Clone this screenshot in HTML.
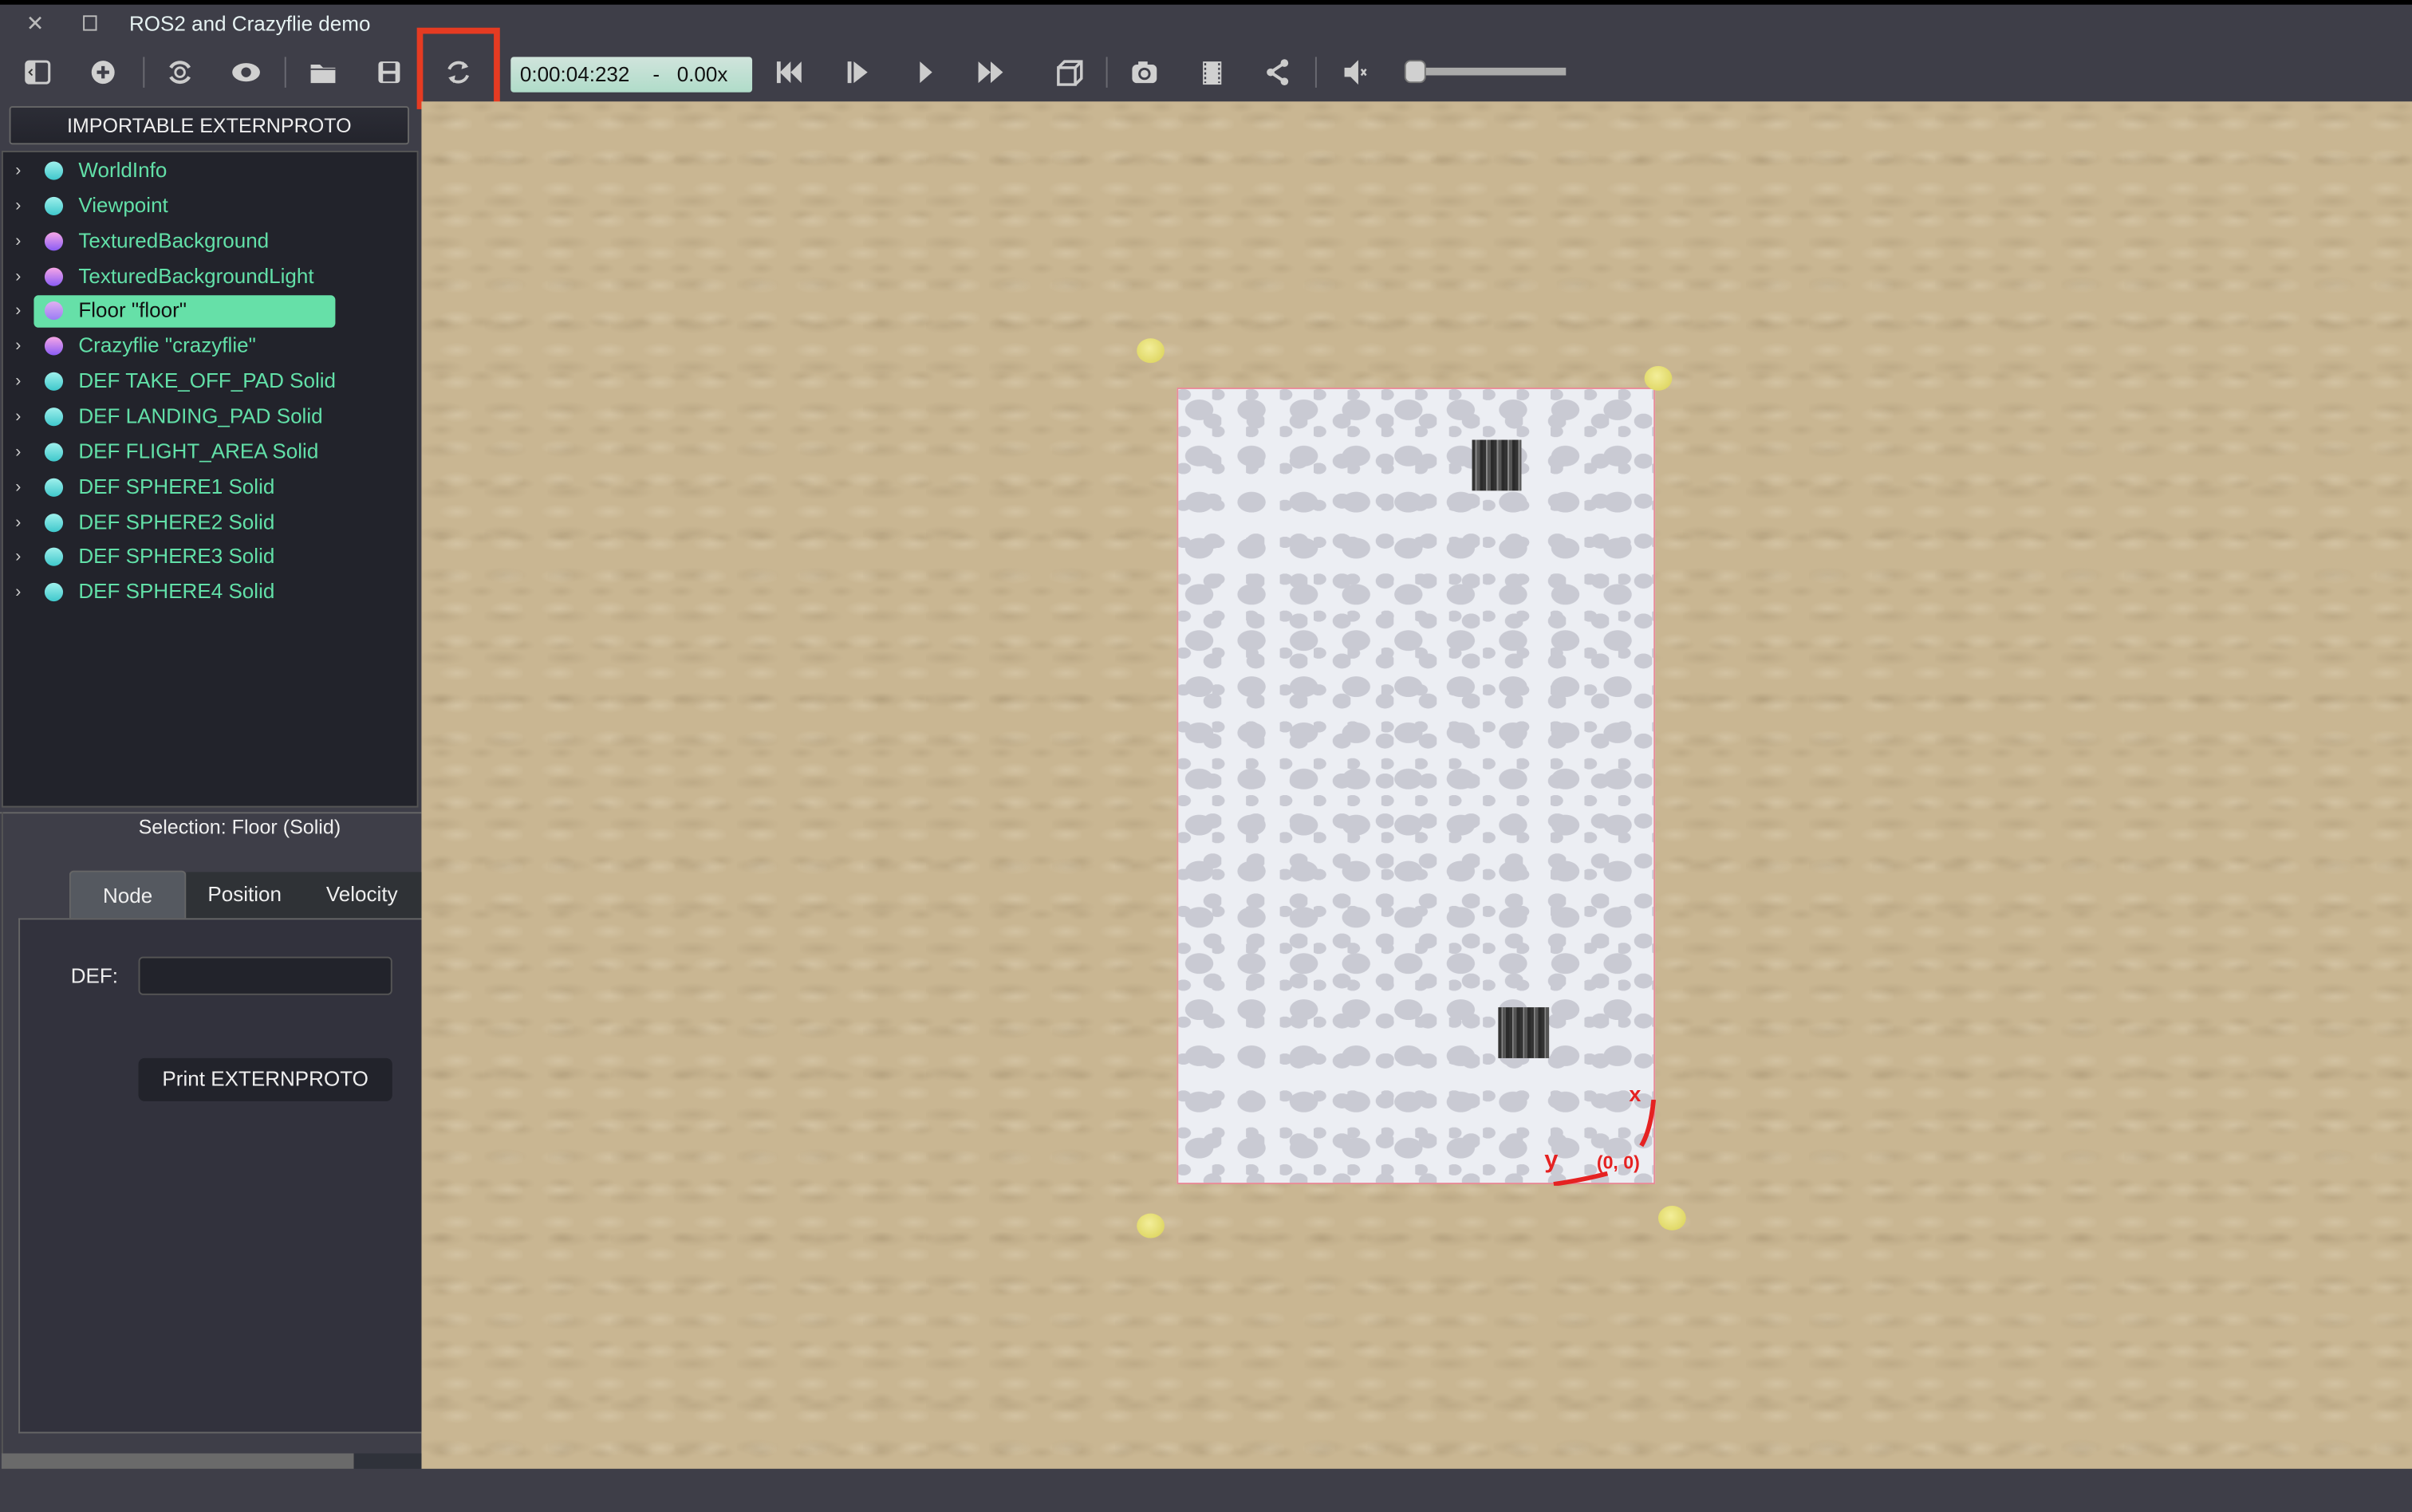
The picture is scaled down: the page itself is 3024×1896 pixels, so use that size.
<!DOCTYPE html>
<html><head><meta charset="utf-8"><style>
*{margin:0;padding:0;box-sizing:border-box}
html,body{width:3024px;height:1896px;overflow:hidden;background:#3e3e48}
#s{position:absolute;left:0;top:0;width:1568px;height:983px;transform:scale(1.928571);transform-origin:0 0;font-family:"Liberation Sans",sans-serif;background:#3e3e48}
.a{position:absolute}
.ic{position:absolute;top:37px;width:20px;height:20px}
.sep{position:absolute;top:37px;width:1px;height:20px;background:#6a6a72}
.row{position:absolute;left:0;height:22px;width:270px;font-size:13.5px;color:#62e0a8;line-height:22px}
.row .ch{position:absolute;left:8px;color:#ccc;font-size:11px}
.row .dot{position:absolute;left:27px;top:5px;width:12px;height:12px;border-radius:50%;background:linear-gradient(#9ff0ec,#3fc8cc)}
.row .dot.p{background:linear-gradient(#f7a6e6,#8a5cf5)}
.row .t{position:absolute;left:49px}
.sand{background-color:#c9b692;background-image:radial-gradient(ellipse 16px 5px at 30% 40%,rgba(120,100,70,.14),transparent),radial-gradient(ellipse 12px 5px at 70% 70%,rgba(255,250,235,.18),transparent),radial-gradient(ellipse 9px 4px at 50% 10%,rgba(110,90,60,.12),transparent);background-size:41px 27px,33px 21px,26px 35px}
.floor{background-color:#eceef3;background-image:radial-gradient(ellipse 15px 11px at 40% 45%,#c9cad3 60%,transparent 62%),radial-gradient(ellipse 10px 8px at 80% 80%,#c9cad3 60%,transparent 62%),radial-gradient(ellipse 8px 6px at 15% 15%,#c9cad3 60%,transparent 62%);background-size:34px 30px,28px 26px,22px 24px}
.ball{position:absolute;width:18px;height:16px;border-radius:50%;background:radial-gradient(circle at 45% 40%,#f3ee9a,#d8cf52)}
</style></head><body><div id="s">
<div class="a" style="left:0;top:0;width:1568px;height:3px;background:#000"></div>
<div class="a" style="left:17px;top:7px;color:#bbb;font-size:14px">✕</div>
<div class="a" style="left:54px;top:10px;width:9px;height:10px;border:1.5px solid #bbb"></div>
<div class="a" style="left:84px;top:8px;color:#e6f2f2;font-size:13.5px">ROS2 and Crazyflie demo</div>
<svg class="ic" style="left:15px" viewBox="0 0 20 20"><rect x="2" y="3" width="15" height="14" rx="2" fill="none" stroke="#ccc" stroke-width="1.6"/><rect x="2" y="3" width="6" height="14" fill="#ccc"/><path d="M6 8 L4 10 L6 12" stroke="#333" fill="none"/></svg>
<svg class="ic" style="left:57px" viewBox="0 0 20 20"><circle cx="10" cy="10" r="7.5" fill="#d0d0d0"/><path d="M10 6v8M6 10h8" stroke="#3e3e48" stroke-width="2.2"/></svg>
<div class="sep" style="left:93px"></div>
<svg class="ic" style="left:107px" viewBox="0 0 20 20"><path d="M4 7 A7 7 0 0 1 16 7 M16 13 A7 7 0 0 1 4 13" stroke="#ccc" stroke-width="2.2" fill="none"/><circle cx="10" cy="10" r="3" fill="none" stroke="#ccc" stroke-width="1.5"/></svg>
<svg class="ic" style="left:150px" viewBox="0 0 20 20"><ellipse cx="10" cy="10" rx="9" ry="6" fill="#d0d0d0"/><circle cx="10" cy="10" r="3.2" fill="#3e3e48"/></svg>
<div class="sep" style="left:185px"></div>
<svg class="ic" style="left:200px" viewBox="0 0 20 20"><path d="M2 5h6l2 2h8v10H2z" fill="#d0d0d0"/><path d="M2 8h16" stroke="#3e3e48"/></svg>
<svg class="ic" style="left:243px" viewBox="0 0 20 20"><rect x="3" y="3" width="14" height="14" rx="2" fill="#d0d0d0"/><rect x="6" y="4" width="8" height="5" fill="#3e3e48"/><rect x="6" y="11" width="8" height="5" fill="#3e3e48"/></svg>
<div class="a" style="left:271px;top:18px;width:54px;height:53px;border:4px solid #e53b22"></div>
<svg class="ic" style="left:288px" viewBox="0 0 20 20"><path d="M15 6 A6.5 6.5 0 0 0 4 8 M5 14 A6.5 6.5 0 0 0 16 12" stroke="#ccc" stroke-width="2" fill="none"/><path d="M13 3 L16.5 6.5 L12 8z M7 17 L3.5 13.5 L8 12z" fill="#ccc"/></svg>
<div class="a" style="left:332px;top:37px;width:157px;height:23px;border-radius:2px;background:linear-gradient(#d0e4dc,#b0dcc9);color:#111;font-size:13.5px;line-height:23px;padding-left:6px;white-space:pre">0:00:04:232    -   0.00x</div>
<svg class="ic" style="left:503px" viewBox="0 0 20 20"><rect x="2" y="3" width="2.5" height="14" fill="#ccc"/><path d="M11 3 L4 10 L11 17z M18 3 L11 10 L18 17z" fill="#ccc"/></svg>
<svg class="ic" style="left:548px" viewBox="0 0 20 20"><rect x="3" y="3" width="2.5" height="14" fill="#ccc"/><path d="M7 3 L16 10 L7 17z" fill="#ccc"/></svg>
<svg class="ic" style="left:592px" viewBox="0 0 20 20"><path d="M6 3 L14 10 L6 17z" fill="#ccc"/></svg>
<svg class="ic" style="left:634px" viewBox="0 0 20 20"><path d="M2 3 L10 10 L2 17z M10 3 L18 10 L10 17z" fill="#ccc"/></svg>
<svg class="ic" style="left:685px" viewBox="0 0 20 20"><path d="M3 7h11v11H3z M3 7l4-4h11v11l-4 4 M14 7l4-4" stroke="#ccc" stroke-width="1.8" fill="none"/></svg>
<div class="sep" style="left:719px"></div>
<svg class="ic" style="left:734px" viewBox="0 0 20 20"><rect x="2" y="5" width="16" height="12" rx="3" fill="#d0d0d0"/><rect x="6" y="3" width="6" height="3" fill="#d0d0d0"/><circle cx="10" cy="11" r="4" fill="#3e3e48"/><circle cx="10" cy="11" r="2.5" fill="#d0d0d0"/></svg>
<svg class="ic" style="left:778px" viewBox="0 0 20 20"><rect x="4" y="3" width="12" height="15" fill="#d0d0d0"/><path d="M5.5 4v13M14.5 4v13" stroke="#3e3e48" stroke-width="1.2" stroke-dasharray="1.5 1.5"/></svg>
<svg class="ic" style="left:821px" viewBox="0 0 20 20"><circle cx="14" cy="4" r="2.5" fill="#ccc"/><circle cx="5" cy="10" r="2.5" fill="#ccc"/><circle cx="14" cy="16" r="2.5" fill="#ccc"/><path d="M14 4 L5 10 L14 16" stroke="#ccc" stroke-width="2" fill="none"/></svg>
<div class="sep" style="left:855px"></div>
<svg class="ic" style="left:871px" viewBox="0 0 20 20"><path d="M3 7h4l5-5v16l-5-5H3z" fill="#ccc"/><path d="M14 8l3 4M17 8l-3 4" stroke="#ccc" stroke-width="1.3"/></svg>
<div class="a" style="left:920px;top:44px;width:98px;height:5px;background:#aaa"></div>
<div class="a" style="left:913px;top:39px;width:14px;height:15px;border-radius:4px;background:#d0d0d0;border:1px solid #777"></div>
<div class="a sand" style="left:274px;top:66px;width:1294px;height:889px"></div>
<div class="a floor" style="left:765px;top:252px;width:311px;height:518px;border:1px solid #e88c98"></div>
<div class="a" style="left:957px;top:286px;width:32px;height:33px;background:#555;background-image:repeating-linear-gradient(90deg,#333 0 2px,#888 2px 3px,#555 3px 5px,#2a2a2a 5px 7px)"></div>
<div class="a" style="left:974px;top:655px;width:33px;height:33px;background:#555;background-image:repeating-linear-gradient(90deg,#333 0 2px,#888 2px 3px,#555 3px 5px,#2a2a2a 5px 7px)"></div>
<div class="a" style="left:1059px;top:703px;color:#e52222;font-weight:bold;font-size:14px">x</div>
<div class="a" style="left:1004px;top:746px;color:#e52222;font-weight:bold;font-size:16px">y</div>
<div class="a" style="left:1038px;top:749px;color:#e52222;font-weight:bold;font-size:12px">(0, 0)</div>
<svg class="a" style="left:1005px;top:715px" width="72" height="56"><path d="M70 0 Q68 20 62 30 M5 55 Q25 52 40 48" stroke="#e52222" stroke-width="3" fill="none"/></svg>
<div class="ball" style="left:739px;top:220px"></div>
<div class="ball" style="left:1069px;top:238px"></div>
<div class="ball" style="left:739px;top:789px"></div>
<div class="ball" style="left:1078px;top:784px"></div>
<div class="a" style="left:6px;top:69px;width:260px;height:25px;border:1px solid #666;border-radius:2px;background:linear-gradient(#2c2d36,#23242c);color:#eee;font-size:13px;text-align:center;line-height:24px">IMPORTABLE EXTERNPROTO</div>
<div class="a" style="left:1px;top:98px;width:271px;height:427px;background:#22232b;border:1px solid #555">
<div class="row" style="top:1px"><span class="ch">›</span><span class="dot"></span><span class="t">WorldInfo</span></div>
<div class="row" style="top:24px"><span class="ch">›</span><span class="dot"></span><span class="t">Viewpoint</span></div>
<div class="row" style="top:47px"><span class="ch">›</span><span class="dot p"></span><span class="t">TexturedBackground</span></div>
<div class="row" style="top:70px"><span class="ch">›</span><span class="dot p"></span><span class="t">TexturedBackgroundLight</span></div>
<div class="a" style="left:20px;top:93px;width:196px;height:21px;background:#66e0a8;border-radius:3px"></div>
<div class="row" style="top:92px;color:#111"><span class="ch">›</span><span class="dot p" style="background:linear-gradient(#e0b0f0,#9a7cf5)"></span><span class="t">Floor "floor"</span></div>
<div class="row" style="top:115px"><span class="ch">›</span><span class="dot p"></span><span class="t">Crazyflie "crazyflie"</span></div>
<div class="row" style="top:138px"><span class="ch">›</span><span class="dot"></span><span class="t">DEF TAKE_OFF_PAD Solid</span></div>
<div class="row" style="top:161px"><span class="ch">›</span><span class="dot"></span><span class="t">DEF LANDING_PAD Solid</span></div>
<div class="row" style="top:184px"><span class="ch">›</span><span class="dot"></span><span class="t">DEF FLIGHT_AREA Solid</span></div>
<div class="row" style="top:207px"><span class="ch">›</span><span class="dot"></span><span class="t">DEF SPHERE1 Solid</span></div>
<div class="row" style="top:230px"><span class="ch">›</span><span class="dot"></span><span class="t">DEF SPHERE2 Solid</span></div>
<div class="row" style="top:252px"><span class="ch">›</span><span class="dot"></span><span class="t">DEF SPHERE3 Solid</span></div>
<div class="row" style="top:275px"><span class="ch">›</span><span class="dot"></span><span class="t">DEF SPHERE4 Solid</span></div>
</div>
<div class="a" style="left:0;top:528px;width:274px;height:1px;background:#666"></div>
<div class="a" style="left:1px;top:528px;width:1px;height:417px;background:#555"></div>
<div class="a" style="left:90px;top:530px;color:#eee;font-size:13px">Selection: Floor (Solid)</div>
<div class="a" style="left:121px;top:567px;width:153px;height:30px;background:#2f3236"></div>
<div class="a" style="left:45px;top:566px;width:76px;height:31px;background:#555960;border:1px solid #666;border-bottom:none;border-radius:3px 3px 0 0;color:#eee;font-size:13.5px;text-align:center;line-height:32px">Node</div>
<div class="a" style="left:135px;top:574px;color:#eee;font-size:13.5px">Position</div>
<div class="a" style="left:212px;top:574px;color:#eee;font-size:13.5px">Velocity</div>
<div class="a" style="left:12px;top:597px;width:262px;height:335px;background:#32323d;border:1px solid #666;border-right:none"></div>
<div class="a" style="left:46px;top:627px;color:#eee;font-size:13.5px">DEF:</div>
<div class="a" style="left:90px;top:622px;width:165px;height:25px;background:#22232b;border:1px solid #555;border-radius:3px"></div>
<div class="a" style="left:90px;top:688px;width:165px;height:28px;background:#22232b;border-radius:4px;color:#eee;font-size:13.5px;text-align:center;line-height:28px">Print EXTERNPROTO</div>
<div class="a" style="left:1px;top:945px;width:229px;height:10px;background:#6a6a6a"></div>
<div class="a" style="left:230px;top:945px;width:44px;height:10px;background:#2f323a"></div>
</div></body></html>
